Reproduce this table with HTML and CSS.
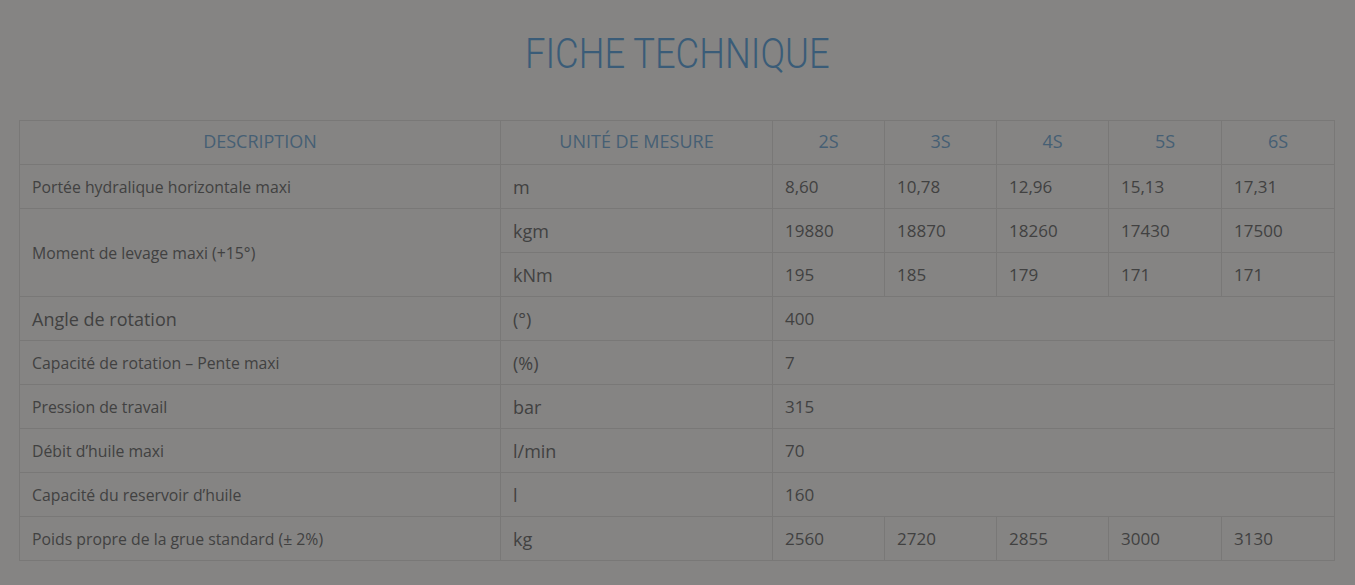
FILE: index.html
```html
<!DOCTYPE html>
<html lang="fr">
<head>
<meta charset="utf-8">
<title>Fiche technique</title>
<link rel="stylesheet" href="styles.css">
</head>
<body>
<div class="page">
  <h1 class="title"><span>FICHE TECHNIQUE</span></h1>
  <table class="spec">
    <colgroup>
      <col class="c-desc"><col class="c-unit"><col class="c-val"><col class="c-val"><col class="c-val"><col class="c-val2"><col class="c-val2">
    </colgroup>
    <thead>
      <tr>
        <th>DESCRIPTION</th>
        <th>UNITÉ DE MESURE</th>
        <th>2S</th><th>3S</th><th>4S</th><th>5S</th><th>6S</th>
      </tr>
    </thead>
    <tbody>
      <tr>
        <td class="desc">Portée hydralique horizontale maxi</td>
        <td class="unit">m</td><td>8,60</td><td>10,78</td><td>12,96</td><td>15,13</td><td>17,31</td>
      </tr>
      <tr>
        <td class="desc" rowspan="2">Moment de levage maxi (+15°)</td>
        <td class="unit">kgm</td><td>19880</td><td>18870</td><td>18260</td><td>17430</td><td>17500</td>
      </tr>
      <tr>
        <td class="unit">kNm</td><td>195</td><td>185</td><td>179</td><td>171</td><td>171</td>
      </tr>
      <tr>
        <td class="desc big">Angle de rotation</td>
        <td class="unit">(°)</td><td colspan="5">400</td>
      </tr>
      <tr>
        <td class="desc">Capacité de rotation – Pente maxi</td>
        <td class="unit">(%)</td><td colspan="5">7</td>
      </tr>
      <tr>
        <td class="desc">Pression de travail</td>
        <td class="unit">bar</td><td colspan="5">315</td>
      </tr>
      <tr>
        <td class="desc">Débit d’huile maxi</td>
        <td class="unit">l/min</td><td colspan="5">70</td>
      </tr>
      <tr>
        <td class="desc">Capacité du reservoir d’huile</td>
        <td class="unit">l</td><td colspan="5">160</td>
      </tr>
      <tr>
        <td class="desc">Poids propre de la grue standard (± 2%)</td>
        <td class="unit">kg</td><td>2560</td><td>2720</td><td>2855</td><td>3000</td><td>3130</td>
      </tr>
    </tbody>
  </table>
</div>
</body>
</html>
```
FILE: styles.css
```css
html, body {
  margin: 0;
  padding: 0;
  background: #858483;
}
body {
  font-family: "Open Sans", "Liberation Sans", sans-serif;
  color: #414141;
}
.page {
  margin: 0 20px 0 19px;
  padding-top: 28px;
}
.title {
  margin: 0 0 42px;
  text-align: center;
  font-family: Roboto, "Liberation Sans", sans-serif;
  font-weight: 300;
  font-size: 43px;
  line-height: 50px;
  color: #3a5c78;
}
.title span {
  display: inline-block;
  transform: scaleX(0.845);
}
.spec {
  width: 1316px;
  border-collapse: collapse;
  table-layout: fixed;
}
.c-desc { width: 481px; }
.c-unit { width: 272px; }
.c-val { width: 112px; }
.c-val2 { width: 113px; }
.spec th, .spec td {
  border: 1px solid #797877;
  height: 44px;
  padding: 0 12px;
  box-sizing: border-box;
  vertical-align: middle;
  text-align: left;
  font-size: 17px;
  font-weight: 400;
}
.spec th {
  text-align: center;
  color: #465f74;
  font-size: 18px;
  padding-bottom: 3px;
}
.spec td.unit {
  font-size: 18px;
}
.spec td.desc {
  font-size: 15.8px;
}
.spec td.desc.big {
  font-size: 18px;
}
```
